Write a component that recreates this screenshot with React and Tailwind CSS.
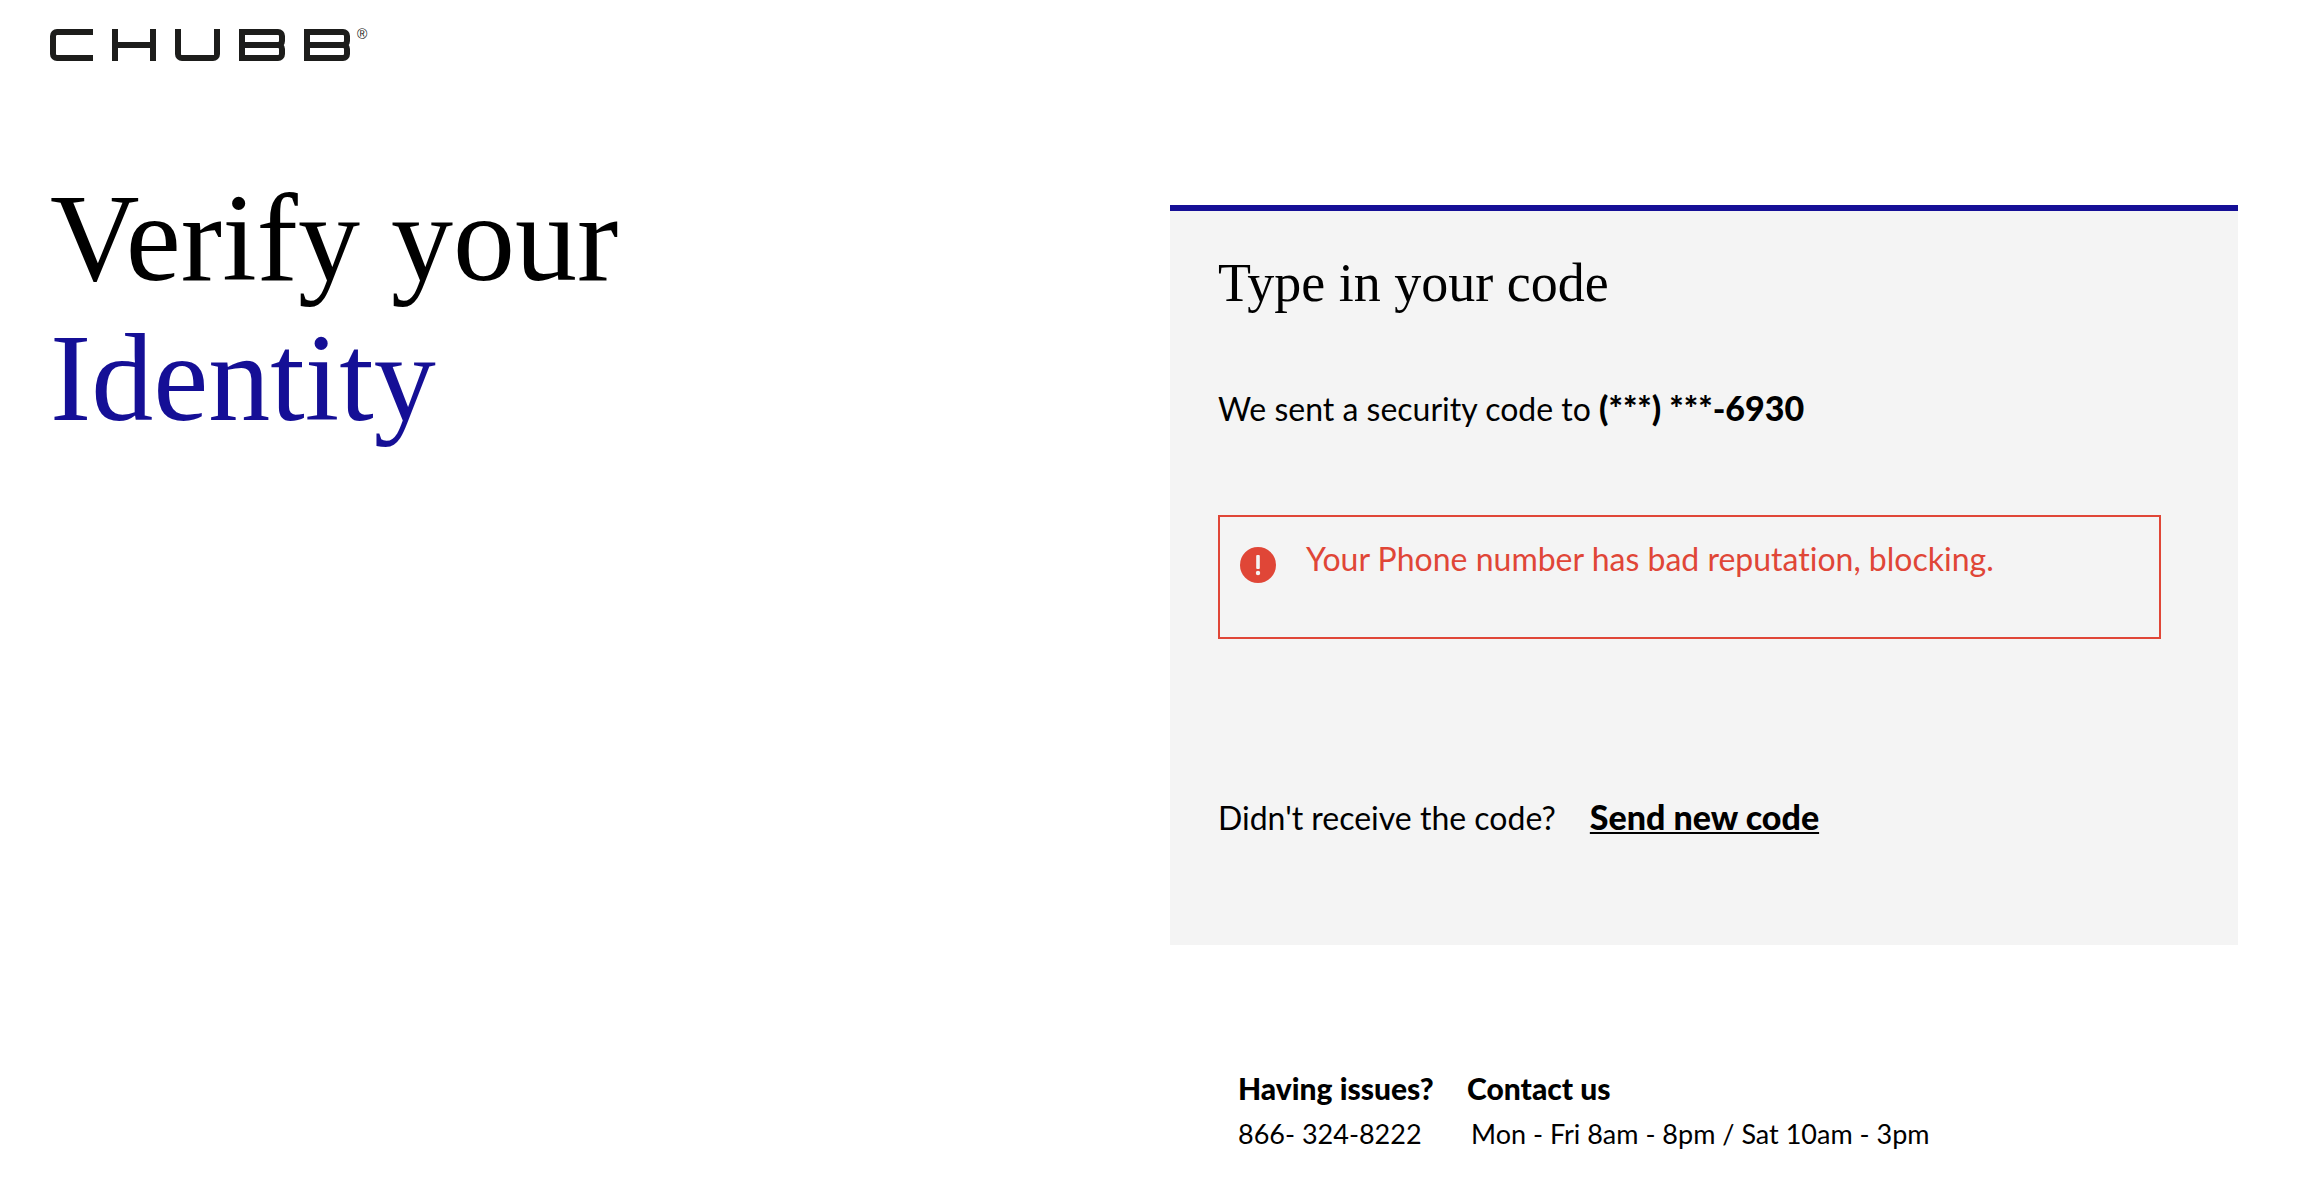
import React from "react";

const hours = "Mon - Fri 8am - 8pm / Sat 10am - 3pm";

function LetterB() {
  return (
    <span className="flex w-[46px] flex-col">
      <span className="h-[19px] rounded-r-[7px] border-6 border-[#1d1d1b]" />
      <span className="-mt-[6px] h-[19px] rounded-r-[7px] border-6 border-[#1d1d1b]" />
    </span>
  );
}

function Logo() {
  return (
    <a href="#" aria-label="Chubb home" className="flex h-8 w-fit items-stretch gap-[19px]">
      <span className="w-[43px] rounded-l-[7px] border-6 border-r-0 border-[#1d1d1b]" />
      <span className="flex w-[44px] items-center border-x-6 border-[#1d1d1b]">
        <span className="h-[6px] w-full bg-[#1d1d1b]" />
      </span>
      <span className="w-[45px] rounded-b-[7px] border-6 border-t-0 border-[#1d1d1b]" />
      <LetterB />
      <span className="flex gap-[7px]">
        <LetterB />
        <span className="font-['Liberation_Sans',sans-serif] text-[14px] leading-[10px] text-[#1d1d1b]">®</span>
      </span>
    </a>
  );
}

function AlertIcon() {
  return (
    <svg viewBox="0 0 36 36" className="size-9 shrink-0" aria-hidden="true">
      <circle cx="18" cy="18" r="18" fill="#e04637" />
      <rect x="16.2" y="8" width="3.6" height="14" rx="1" fill="#f4f4f4" />
      <circle cx="18" cy="26" r="2.2" fill="#f4f4f4" />
    </svg>
  );
}

export default function App() {
  const handleResend = () => {
    console.log("resend code");
  };

  return (
    <div className="min-h-screen bg-white pr-[82px] pl-[50px] font-['Lato',sans-serif] text-black [font-variant-ligatures:none]">
      <header className="pt-[29px]">
        <Logo />
      </header>

      <main className="grid grid-cols-[1120fr_1068fr] items-start">
        <h1 className="mt-[108px] font-['Liberation_Serif',serif] text-[124px] leading-[140px]">
          Verify your
          <span className="block text-[#150f96]">Identity</span>
        </h1>

        <div className="mt-36">
          <section className="border-t-6 border-[#150f96] bg-[#f4f4f4] px-12 pt-10 pb-[107px]">
            <h2 className="font-['Liberation_Serif',serif] text-[54px] leading-[64px]">
              Type in your code
            </h2>

            <p className="mt-[73px] text-[32px] leading-[40px]">
              We sent a security code to <b className="text-[34px] font-black">(***) ***-6930</b>
            </p>

            <div
              role="alert"
              className="mt-[86px] mr-[29px] flex min-h-[124px] gap-[30px] border-2 border-[#e04637] px-5 pt-[22px] text-[#e04637]"
            >
              <div className="pt-2">
                <AlertIcon />
              </div>
              <p className="text-[32px] leading-[40px]">
                Your Phone number has bad reputation, blocking.
              </p>
            </div>

            <div className="mt-[158px] flex items-baseline gap-[34px] text-[32px] leading-[40px]">
              <span>Didn't receive the code?</span>
              <button
                type="button"
                onClick={handleResend}
                className="cursor-pointer text-[34px] font-black underline decoration-2 underline-offset-2"
              >
                Send new code
              </button>
            </div>
          </section>

          <footer className="mt-[120px] grid grid-cols-[205px_1fr] gap-x-6 pl-[68px] text-[27px] leading-[46px]">
            <b className="text-[30px] font-black">Having issues?</b>
            <b className="text-[30px] font-black">Contact us</b>
            <span>866- 324-8222</span>
            <span className="pl-1">{hours}</span>
          </footer>
        </div>
      </main>
    </div>
  );
}
